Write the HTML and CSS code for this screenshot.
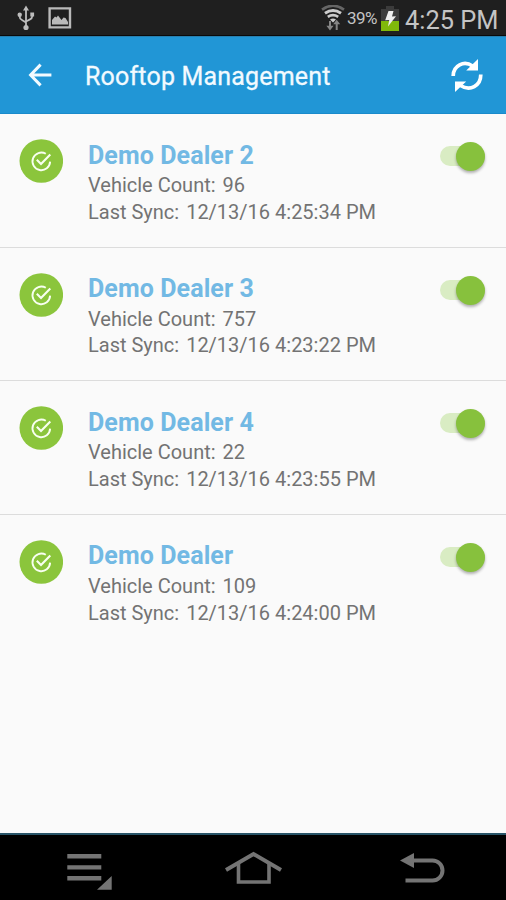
FILE: index.html
```html
<!DOCTYPE html>
<html lang="en">
<head>
<meta charset="utf-8">
<title>Rooftop Management</title>
<link rel="stylesheet" href="styles.css">
</head>
<body>
<svg class="defs" width="0" height="0" aria-hidden="true">
  <symbol id="check" viewBox="0 0 44 44">
    <circle cx="22.3" cy="22" r="21.8" fill="#8bc53c"/>
    <path d="M26.8 14.8A8.8 8.8 0 1 0 31.1 22.6" fill="none" stroke="#f8fff0" stroke-width="1.9"/>
    <path d="M17.8 20.7l4.2 4.2 9.3-9.5" fill="none" stroke="#f8fff0" stroke-width="2.1"/>
  </symbol>
</svg>
<div class="screen">
  <header class="status">
    <svg class="usb" width="18" height="26" viewBox="0 0 18 26" fill="none" stroke="#bcbcbc" stroke-width="1.8">
      <path d="M9 22V4M2.7 9.5v2.2q0 2.3 2.3 3.3l4 2.5M15.2 9.5v1.8q0 2.2-2.2 3.1L9 16.5"/>
      <path d="M9 .5l3 5H6zM13.3 7.5h3.8v4h-3.8z" fill="#bcbcbc" stroke="none"/>
      <circle cx="2.7" cy="9.8" r="2.2" fill="#bcbcbc" stroke="none"/>
      <circle cx="9" cy="22.5" r="2.6" fill="#bcbcbc" stroke="none"/>
    </svg>
    <svg class="photo" width="24" height="22" viewBox="0 0 24 22">
      <path d="M1.6 1.4h20.4v19H1.6z" fill="none" stroke="#bababa" stroke-width="2.4"/>
      <path d="M4 17.5V13l3-3.5 1.5 1L10 8.5l3.5 4.5 2-2.5 2 .5 2.5 4v2.5z" fill="#bababa"/>
    </svg>
    <span class="spacer"></span>
    <svg class="wifi" width="24" height="27" viewBox="0 0 24 27" fill="none">
      <path d="M1 4.6Q12-3 23 4.6" stroke="#666" stroke-width="2.6"/>
      <path d="M4 8.2Q12 2.8 20 8.2" stroke="#ccc" stroke-width="3"/>
      <path d="M6.8 11.8Q12 8.5 17.2 11.8" stroke="#ccc" stroke-width="2.7"/>
      <path d="M9 14.5q3-2 6 0l-3 3z" fill="#ccc"/>
      <path d="M9 16v7M15.7 25v-7" stroke="#858585" stroke-width="2"/>
      <path d="M5.4 20.8h7.2L9 25.5zM12.2 19.2h7L15.7 14.8z" fill="#858585"/>
    </svg>
    <span class="percent">39%</span>
    <svg class="battery" width="18" height="25" viewBox="0 0 18 25">
      <path d="M5 0h8v3h5v22H0V3h5z" fill="#3c3c3c"/>
      <path d="M0 15h18v10H0z" fill="#80b90b"/>
      <path d="M7.5 5h5L11 10.5l4-.3-8 10.3 1.2-6.6-4 .3z" fill="#eee"/>
    </svg>
    <span class="clock">4:25 PM</span>
  </header>
  <div class="appbar">
    <svg class="back" width="24" height="24" viewBox="0 0 24 24" fill="none" stroke="#f2faff" stroke-width="3">
      <path d="M12.6 1.6L2.6 12l10 10.4M2.8 12H23.4"/>
    </svg>
    <h1 class="title">Rooftop Management</h1>
    <svg class="refresh" width="34" height="34" viewBox="0 0 34 34">
      <path d="M3.2 17C3.2 6.5 14 1.2 22.5 7M30.8 15.5C30.8 27 20 32.6 10.5 26.5" fill="none" stroke="#fff" stroke-width="3.7"/>
      <path d="M28 0v11.5H16.2zM5 33V22.5h11.2z" fill="#fff"/>
    </svg>
  </div>
  <main class="list">
    <section class="row">
      <svg class="badge" width="44" height="44"><use href="#check"/></svg>
      <div class="info"><h2 class="name">Demo Dealer 2</h2><p class="line count">Vehicle Count: <span class="num">96</span></p><p class="line sync">Last Sync: <span class="num">12/13/16 4:25:34 PM</span></p></div>
      <span class="switch"><span class="knob"></span></span>
    </section>
    <section class="row">
      <svg class="badge" width="44" height="44"><use href="#check"/></svg>
      <div class="info"><h2 class="name">Demo Dealer 3</h2><p class="line count">Vehicle Count: <span class="num">757</span></p><p class="line sync">Last Sync: <span class="num">12/13/16 4:23:22 PM</span></p></div>
      <span class="switch"><span class="knob"></span></span>
    </section>
    <section class="row">
      <svg class="badge" width="44" height="44"><use href="#check"/></svg>
      <div class="info"><h2 class="name">Demo Dealer 4</h2><p class="line count">Vehicle Count: <span class="num">22</span></p><p class="line sync">Last Sync: <span class="num">12/13/16 4:23:55 PM</span></p></div>
      <span class="switch"><span class="knob"></span></span>
    </section>
    <section class="row">
      <svg class="badge" width="44" height="44"><use href="#check"/></svg>
      <div class="info"><h2 class="name">Demo Dealer</h2><p class="line count">Vehicle Count: <span class="num">109</span></p><p class="line sync">Last Sync: <span class="num">12/13/16 4:24:00 PM</span></p></div>
      <span class="switch"><span class="knob"></span></span>
    </section>
  </main>
  <nav class="navbar">
    <svg width="46" height="38" viewBox="0 0 46 38" fill="#747474">
      <path d="M.3 .9h34v4.6H.3zM.3 12.2h34v4.2H.3zM.3 23h34v4.6H.3zM30 36.7L44.7 23v13.7z"/>
    </svg>
    <svg class="home" width="58" height="34" viewBox="0 0 58 34" fill="none" stroke="#747474" stroke-width="4">
      <path d="M1 19L28.5 3 56 19"/>
      <path d="M13.5 12.5V31h30.5V12.5" stroke-width="3.6"/>
    </svg>
    <svg class="return" width="46" height="32" viewBox="0 0 46 32">
      <path d="M12 8.5h20.5a10 10 0 0 1 0 20H5.5" fill="none" stroke="#747474" stroke-width="4"/>
      <path d="M0 8.5L14 1v15z" fill="#747474"/>
    </svg>
  </nav>
</div>
</body>
</html>
```
FILE: styles.css
```css
* { box-sizing: border-box; }
body { margin: 0; font-family: Roboto, "Liberation Sans", sans-serif; }
h1, h2, p { margin: 0; }
svg { display: block; flex: none; }
.defs { position: absolute; }
.screen { width: 506px; height: 900px; display: flex; flex-direction: column; background: #fafafa; overflow: hidden; }
.status { height: 36px; flex: none; display: flex; align-items: flex-start; background: #1f1f1f; border-bottom: 1px solid #0a0a0a; color: #c4c4c4; white-space: nowrap; }
.usb { margin: 5px 0 0 17px; }
.photo { margin: 7px 0 0 13px; }
.spacer { flex: 1; }
.wifi { margin: 5px 2px 0 0; }
.percent { width: 34px; font-size: 17px; line-height: 37px; letter-spacing: -0.6px; }
.battery { margin-top: 6px; }
.clock { width: 101px; margin-left: 6px; font-size: 25.4px; line-height: 40px; letter-spacing: 0; }
.appbar { height: 78px; flex: none; display: flex; align-items: flex-start; background: #2196d6; border-top: 1px solid #287faf; border-bottom: 1px solid #198acb; }
.back { margin: 26px 0 0 28px; }
.title { flex: 1; margin-left: 33px; font-size: 25px; font-weight: 400; line-height: 80px; letter-spacing: 0.18px; color: #f2faff; -webkit-text-stroke: 0.3px #f2faff; white-space: nowrap; }
.refresh { margin: 22px 22px 0 0; }
.list { flex: 1; }
.row { height: 133.6px; display: flex; align-items: flex-start; padding: 25px 21px 0 19px; border-bottom: 1px solid #dcdcdc; }
.row:last-child { border-bottom: 0; }
.info { flex: 1; margin-left: 25px; white-space: nowrap; }
.name { padding-top: 0.6px; font-size: 25px; font-weight: 700; line-height: 32.4px; letter-spacing: 0.1px; color: #72b9e4; }
.line { font-size: 20px; line-height: 26.8px; color: #737373; }
.num { margin-left: 2px; }
.switch { position: relative; width: 45px; height: 20px; margin: 7px 0 0; border-radius: 10px; background: #d9ecc3; }
.knob { position: absolute; right: 0; top: -4px; width: 29px; height: 29px; border-radius: 50%; background: #87c13d; box-shadow: 0 2px 3px rgba(0, 0, 0, .3); }
.navbar { height: 67px; flex: none; display: flex; align-items: flex-start; padding: 18px 0 0 67px; background: #000; border-top: 2px solid #285468; }
.home { margin: -2px 0 0 112px; }
.return { margin: -1px 0 0 117px; }
```
